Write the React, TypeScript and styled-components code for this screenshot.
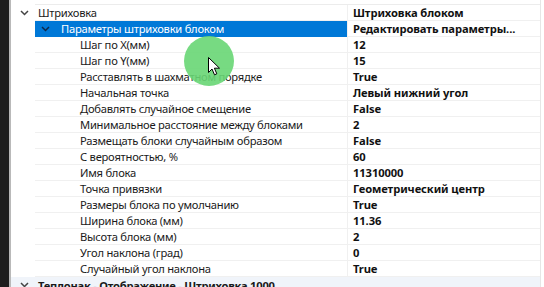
import React from "react";
import styled, { createGlobalStyle } from "styled-components";

const Global = createGlobalStyle`
  html, body { margin: 0; padding: 0; background: #ffffff; overflow: hidden; }
  body { font-family: "Noto Sans", "Open Sans", sans-serif; }
`;

const Frame = styled.div`
  position: relative;
  display: flex;
  width: 544px;
  height: 287px;
  overflow: hidden;
  background: #ffffff;
`;

const SideStrip = styled.div`
  width: 9px;
  flex: none;
  background: #1e1e1e;
  border-right: 2px solid #b9b9b9;
`;

const Grid = styled.div`
  flex: 1;
  display: flex;
  flex-direction: column;
  padding-top: 4px;
  border-right: 1px solid #e6e6e6;
  margin-right: 3px;
`;

const TopEdge = styled.div`
  height: 0;
  margin-left: 24px;
  border-top: 1px solid #ececec;
`;

const Row = styled.div<{ $category?: boolean }>`
  display: grid;
  grid-template-columns: 24px 312px 1fr;
  height: 16px;
  flex: none;
  box-sizing: border-box;
  background: ${(p) => (p.$category ? "#f0f4fa" : "transparent")};
  font-size: 11.2px;
  letter-spacing: -0.25px;
  line-height: 15px;
  color: #1a1a1a;
`;

const Gutter = styled.div`
  display: flex;
  align-items: center;
  justify-content: center;
  padding-left: 2px;
`;

const NameCell = styled.div<{ $indent: number; $selected?: boolean }>`
  display: flex;
  align-items: center;
  padding-left: ${(p) => p.$indent}px;
  background: ${(p) => (p.$selected ? "#0078d7" : "transparent")};
  color: ${(p) => (p.$selected ? "#ffffff" : "#1a1a1a")};
  border-bottom: 1px solid ${(p) => (p.$selected ? "#0078d7" : "#f0f0f0")};
  white-space: nowrap;
  overflow: hidden;
`;

const ValueCell = styled.div`
  display: flex;
  align-items: center;
  padding-left: 5px;
  border-left: 1px solid #f0f0f0;
  border-bottom: 1px solid #f0f0f0;
  font-weight: 700;
  letter-spacing: -0.1px;
  color: #111111;
  white-space: nowrap;
  overflow: hidden;
`;

const SpanCell = styled.div`
  grid-column: 2 / 4;
  display: flex;
  align-items: center;
  padding-left: 3px;
  font-weight: 700;
  white-space: nowrap;
  overflow: hidden;
`;

const SubChevronBox = styled.span`
  display: inline-flex;
  width: 20px;
  margin-left: -19px;
  align-items: center;
  justify-content: flex-start;
`;

const Highlight = styled.div`
  position: absolute;
  left: 184px;
  top: 36px;
  width: 50px;
  height: 50px;
  border-radius: 50%;
  background: rgba(104, 214, 116, 0.9);
  pointer-events: none;
`;

const Cursor = styled.svg`
  position: absolute;
  left: 208px;
  top: 57px;
  pointer-events: none;
`;

const Chevron = ({ color }: { color: string }) => (
  <svg width="9" height="6" viewBox="0 0 9 6">
    <path d="M1 1 L4.5 4.5 L8 1" fill="none" stroke={color} strokeWidth="1.5" />
  </svg>
);

type Prop = { name: string; value: string };

const props: Prop[] = [
  { name: "Шаг по X(мм)", value: "12" },
  { name: "Шаг по Y(мм)", value: "15" },
  { name: "Расставлять в шахматном порядке", value: "True" },
  { name: "Начальная точка", value: "Левый нижний угол" },
  { name: "Добавлять случайное смещение", value: "False" },
  { name: "Минимальное расстояние между блоками", value: "2" },
  { name: "Размещать блоки случайным образом", value: "False" },
  { name: "С вероятностью, %", value: "60" },
  { name: "Имя блока", value: "11310000" },
  { name: "Точка привязки", value: "Геометрический центр" },
  { name: "Размеры блока по умолчанию", value: "True" },
  { name: "Ширина блока (мм)", value: "11.36" },
  { name: "Высота блока (мм)", value: "2" },
  { name: "Угол наклона (град)", value: "0" },
  { name: "Случайный угол наклона", value: "True" },
];

export default function App() {
  return (
    <>
      <Global />
      <Frame>
        <SideStrip />
        <Grid>
          <TopEdge />
          <Row>
            <Gutter>
              <Chevron color="#444444" />
            </Gutter>
            <NameCell $indent={3}>Штриховка</NameCell>
            <ValueCell>Штриховка блоком</ValueCell>
          </Row>
          <Row>
            <Gutter />
            <NameCell $indent={25} $selected>
              <SubChevronBox>
                <Chevron color="#0d2848" />
              </SubChevronBox>
              Параметры штриховки блоком
            </NameCell>
            <ValueCell>Редактировать параметры...</ValueCell>
          </Row>
          {props.map((p) => (
            <Row key={p.name}>
              <Gutter />
              <NameCell $indent={45}>{p.name}</NameCell>
              <ValueCell>{p.value}</ValueCell>
            </Row>
          ))}
          <Row $category>
            <Gutter>
              <Chevron color="#444444" />
            </Gutter>
            <SpanCell>Теплонак - Отображение - Штриховка 1000</SpanCell>
          </Row>
        </Grid>
        <Highlight />
        <Cursor width="14" height="19" viewBox="0 0 14 19">
          <path
            d="M0.5 0.5 L0.5 15.5 L4 12 L6.5 17.8 L8.8 16.8 L6.4 11.2 L11.5 11.2 Z"
            fill="#ffffff"
            stroke="#000000"
            strokeWidth="1"
            strokeLinejoin="round"
          />
        </Cursor>
      </Frame>
    </>
  );
}
